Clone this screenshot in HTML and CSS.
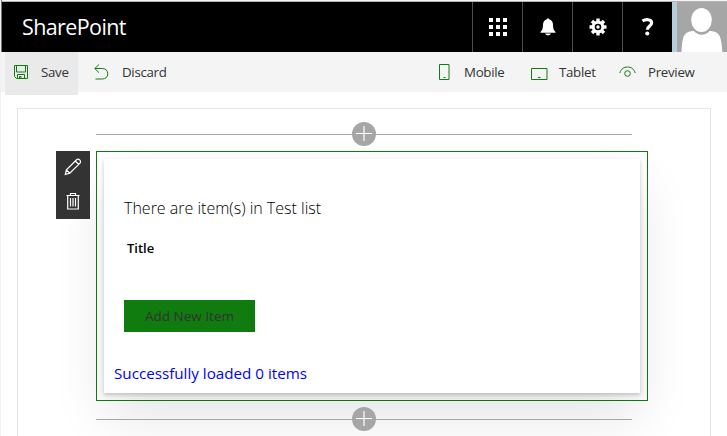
FILE: index.html
```html
<!DOCTYPE html>
<html lang="en">
<head>
<meta charset="utf-8">
<title>SharePoint</title>
<link rel="stylesheet" href="styles.css">
</head>
<body>
<header class="suite">
  <div class="brand"><span>SharePoint</span></div>
  <div class="tile"><svg width="18" height="18" viewBox="0 0 18 18" fill="#fff"><path d="M0 0h4v4H0zM7 0h4v4H7zM14 0h4v4h-4zM0 7h4v4H0zM7 7h4v4H7zM14 7h4v4h-4zM0 14h4v4H0zM7 14h4v4H7zM14 14h4v4h-4z"/></svg></div>
  <div class="tile"><svg width="16" height="18" viewBox="0 0 16 18" fill="#fff"><path d="M7 1.200a1 1 0 0 1 2 0C12 2 13 4.300 13 7c0 4 1 5.500 2.500 7v.7H.5V14C2 12.500 3 11 3 7c0-2.700 1-5 4-5.800zM5 15.500h6c-.4 1.200-1.500 1.800-3 1.800s-2.600-.6-3-1.800z"/></svg></div>
  <div class="tile"><svg width="18" height="18" viewBox="0 0 18 18"><path d="M9 .5v17M.5 9h17M3 3l12 12M15 3L3 15" stroke="#fff" stroke-width="3.400"/><circle cx="9" cy="9" r="6.300" fill="#fff"/><circle cx="9" cy="9" r="2.500" fill="none" stroke="#000" stroke-width="1.600"/></svg></div>
  <div class="tile"><svg width="13" height="18" viewBox="0 0 13 18"><path d="M1.500 3C4 1.300 10.600.8 10.600 4.800 10.600 8 6.400 8 6.400 11.700" fill="none" stroke="#fff" stroke-width="3.200"/><circle cx="6.300" cy="15.500" r="2.100" fill="#fff"/></svg></div>
  <div class="avatar"><svg width="50" height="50" viewBox="0 0 50 50" fill="#fff"><ellipse cx="24.500" cy="18" rx="10.300" ry="12"/><path d="M4.500 50c.3-7 .8-12 2-15 1.500-4 5-6 10.500-6 4 5 11.500 5 15.500 0 5.500 0 9 2 10.500 6 1.200 3 2 8 2.300 15z"/></svg></div>
</header>
<nav class="commands">
  <div class="cmd save"><svg width="15" height="15" viewBox="0 0 15 15"><path d="M.5.500h13v13H2.500l-2-2zM2.500.500v6.500h9V.500M3.500 13.500V9.500h7v4M5.500 13.500v-2h1.500v2" /></svg><span class="label">Save</span></div>
  <div class="cmd discard"><svg width="15" height="16" viewBox="0 0 15 16"><path d="M5 .5L.8 4.500 5 8.700M.8 4.500h7.500c3.500 0 5.500 2.200 5.500 5.300s-2.300 5.200-5.500 5.200H1.500"/></svg><span class="label">Discard</span></div>
  <div class="spacer"></div>
  <div class="cmd mobile"><svg width="11" height="16" viewBox="0 0 11 16"><path d="M.5.500h9.500v15H.5zM4.500 13.500h2"/></svg><span class="label">Mobile</span></div>
  <div class="cmd tablet"><svg width="17" height="12" viewBox="0 0 17 12"><path d="M.5.500h15.500v11H.5zM7 9.500h2.500"/></svg><span class="label">Tablet</span></div>
  <div class="cmd preview"><svg width="17" height="13" viewBox="0 0 17 13"><path d="M.7 7C2.200 2.800 4.800 1 8.500 1s6.300 1.800 7.800 6"/><circle cx="8.500" cy="7.500" r="2.800"/></svg><span class="label">Preview</span></div>
</nav>
<main class="page">
  <section class="canvas">
    <div class="divider"><span class="add"><svg width="16" height="16" viewBox="0 0 16 16"><path d="M0 7.500h16M8 0v15"/></svg></span></div>
    <div class="row">
      <div class="tools">
        <svg width="18" height="18" viewBox="0 0 18 18"><path d="M1.300 16.500l1.100-4.600L12.800 1.500c2-1.200 4.500 1.200 3.400 3.300L5.800 15.200zM2.400 11.900l3.400 3.300M11.300 3l3.500 3.500"/></svg>
        <svg width="14" height="17" viewBox="0 0 14 17"><path d="M.5 2.500h13M4.500 2.500v-2h5v2M1.700 2.500v13.500h10.600V2.500M4.500 5v8.500M7 5v8.500M9.500 5v8.500"/></svg>
      </div>
      <div class="webpart">
        <article class="card">
          <p class="heading">There are item(s) in Test list</p>
          <p class="column">Title</p>
          <button class="button">Add New Item</button>
          <p class="status">Successfully loaded 0 items</p>
        </article>
      </div>
    </div>
    <div class="divider last"><span class="add"><svg width="16" height="16" viewBox="0 0 16 16"><path d="M0 7.500h16M8 0v15"/></svg></span></div>
  </section>
</main>
</body>
</html>
```
FILE: styles.css
```css
* { box-sizing: border-box; }
body {
  margin: 0;
  height: 436px;
  overflow: hidden;
  border-left: 1px solid #f1f1f1;
  background: #fff;
  font-family: "Open Sans", "Noto Sans", sans-serif;
  color: #333;
}
p { margin: 0; }
svg { display: block; flex: none; }

.suite {
  display: flex;
  height: 52px;
  padding-top: 1px;
  border-left: 1px solid #777;
  background: linear-gradient(#f4f4f4 1px, #b4b4b4 1px, #b4b4b4 2px, #000 2px);
}
.brand {
  flex: 1;
  padding: 1px 0 0 20px;
  color: #fff;
  font-size: 21.500px;
  line-height: 50px;
  letter-spacing: -.6px;
}
.tile {
  display: flex;
  width: 50px;
  margin-top: 1px;
  align-items: center;
  justify-content: center;
  border-left: 1px solid #4d4d4d;
}
.avatar {
  width: 55px;
  margin-top: 1px;
  border-left: 5px solid #b5cfda;
  background: #a6a6a6;
  overflow: hidden;
}

.commands {
  display: flex;
  height: 40px;
  background: #f4f4f4;
  font-size: 13.300px;
  line-height: 40px;
}
.cmd { display: flex; align-items: center; height: 40px; }
.cmd svg { fill: none; stroke: #107c10; stroke-width: 1; }
.label { letter-spacing: -.3px; }
.save {
  width: 73px;
  height: 43px;
  margin-left: 4px;
  padding: 0 0 3px 9px;
  gap: 12px;
  background: #eaeaea;
}
.discard { margin-left: 16px; gap: 13px; }
.spacer { flex: 1; }
.mobile { width: 92px; gap: 14px; }
.tablet { width: 89px; gap: 11px; }
.tablet svg { margin-top: 3px; }
.preview { width: 108px; gap: 12px; }
.mobile, .tablet { position: relative; left: 1px; }

.page { padding: 16px 16px 0; }
.canvas {
  width: 694px;
  height: 340px;
  padding-top: 13px;
  border: 1px solid #e5e5e5;
}
.divider {
  display: flex;
  align-items: center;
  justify-content: center;
  width: 536px;
  height: 24px;
  margin-left: 78px;
  position: relative;
  background: linear-gradient(#a6a6a6, #a6a6a6) 0 12px / 100% 1px no-repeat;
}
.last { margin-top: 6px; }
.add {
  display: flex;
  align-items: center;
  justify-content: center;
  width: 24px;
  height: 24px;
  border-radius: 50%;
  background: #a6a6a6;
}
.add svg { fill: none; stroke: #fff; stroke-width: 1.200; }
.row { display: flex; margin: 5px 0 0 38px; }
.tools {
  display: flex;
  flex-direction: column;
  align-items: center;
  width: 34px;
  height: 68px;
  margin-right: 6px;
  padding-top: 7px;
  gap: 17px;
  background: #333;
  z-index: 1;
}
.tools svg { fill: none; stroke: #fff; stroke-width: 1.200; }
.webpart {
  width: 552px;
  height: 250px;
  padding: 7px;
  border: 1px solid #107c10;
}
.card {
  width: 536px;
  height: 234px;
  padding: 37px 10px 0 20px;
  background: #fff;
  box-shadow: 0 2px 4px 0 rgba(0, 0, 0, .2), 0 25px 50px 0 rgba(0, 0, 0, .1);
}
.heading { color: #000; font-size: 16px; font-weight: 350; line-height: 24px; }
.column {
  margin: 16px 0 0 3px;
  color: #000;
  font-size: 13px;
  font-weight: 600;
  line-height: 24px;
}
.button {
  display: block;
  width: 131px;
  height: 32px;
  margin-top: 40px;
  padding: 0;
  border: 0;
  background: #107c10;
  color: #333;
  font: 13.500px/32px "Open Sans", "Noto Sans", sans-serif;
}
.status {
  margin: 29px 0 0 -10px;
  color: #00f;
  font-size: 15.200px;
  line-height: 24px;
}
```
